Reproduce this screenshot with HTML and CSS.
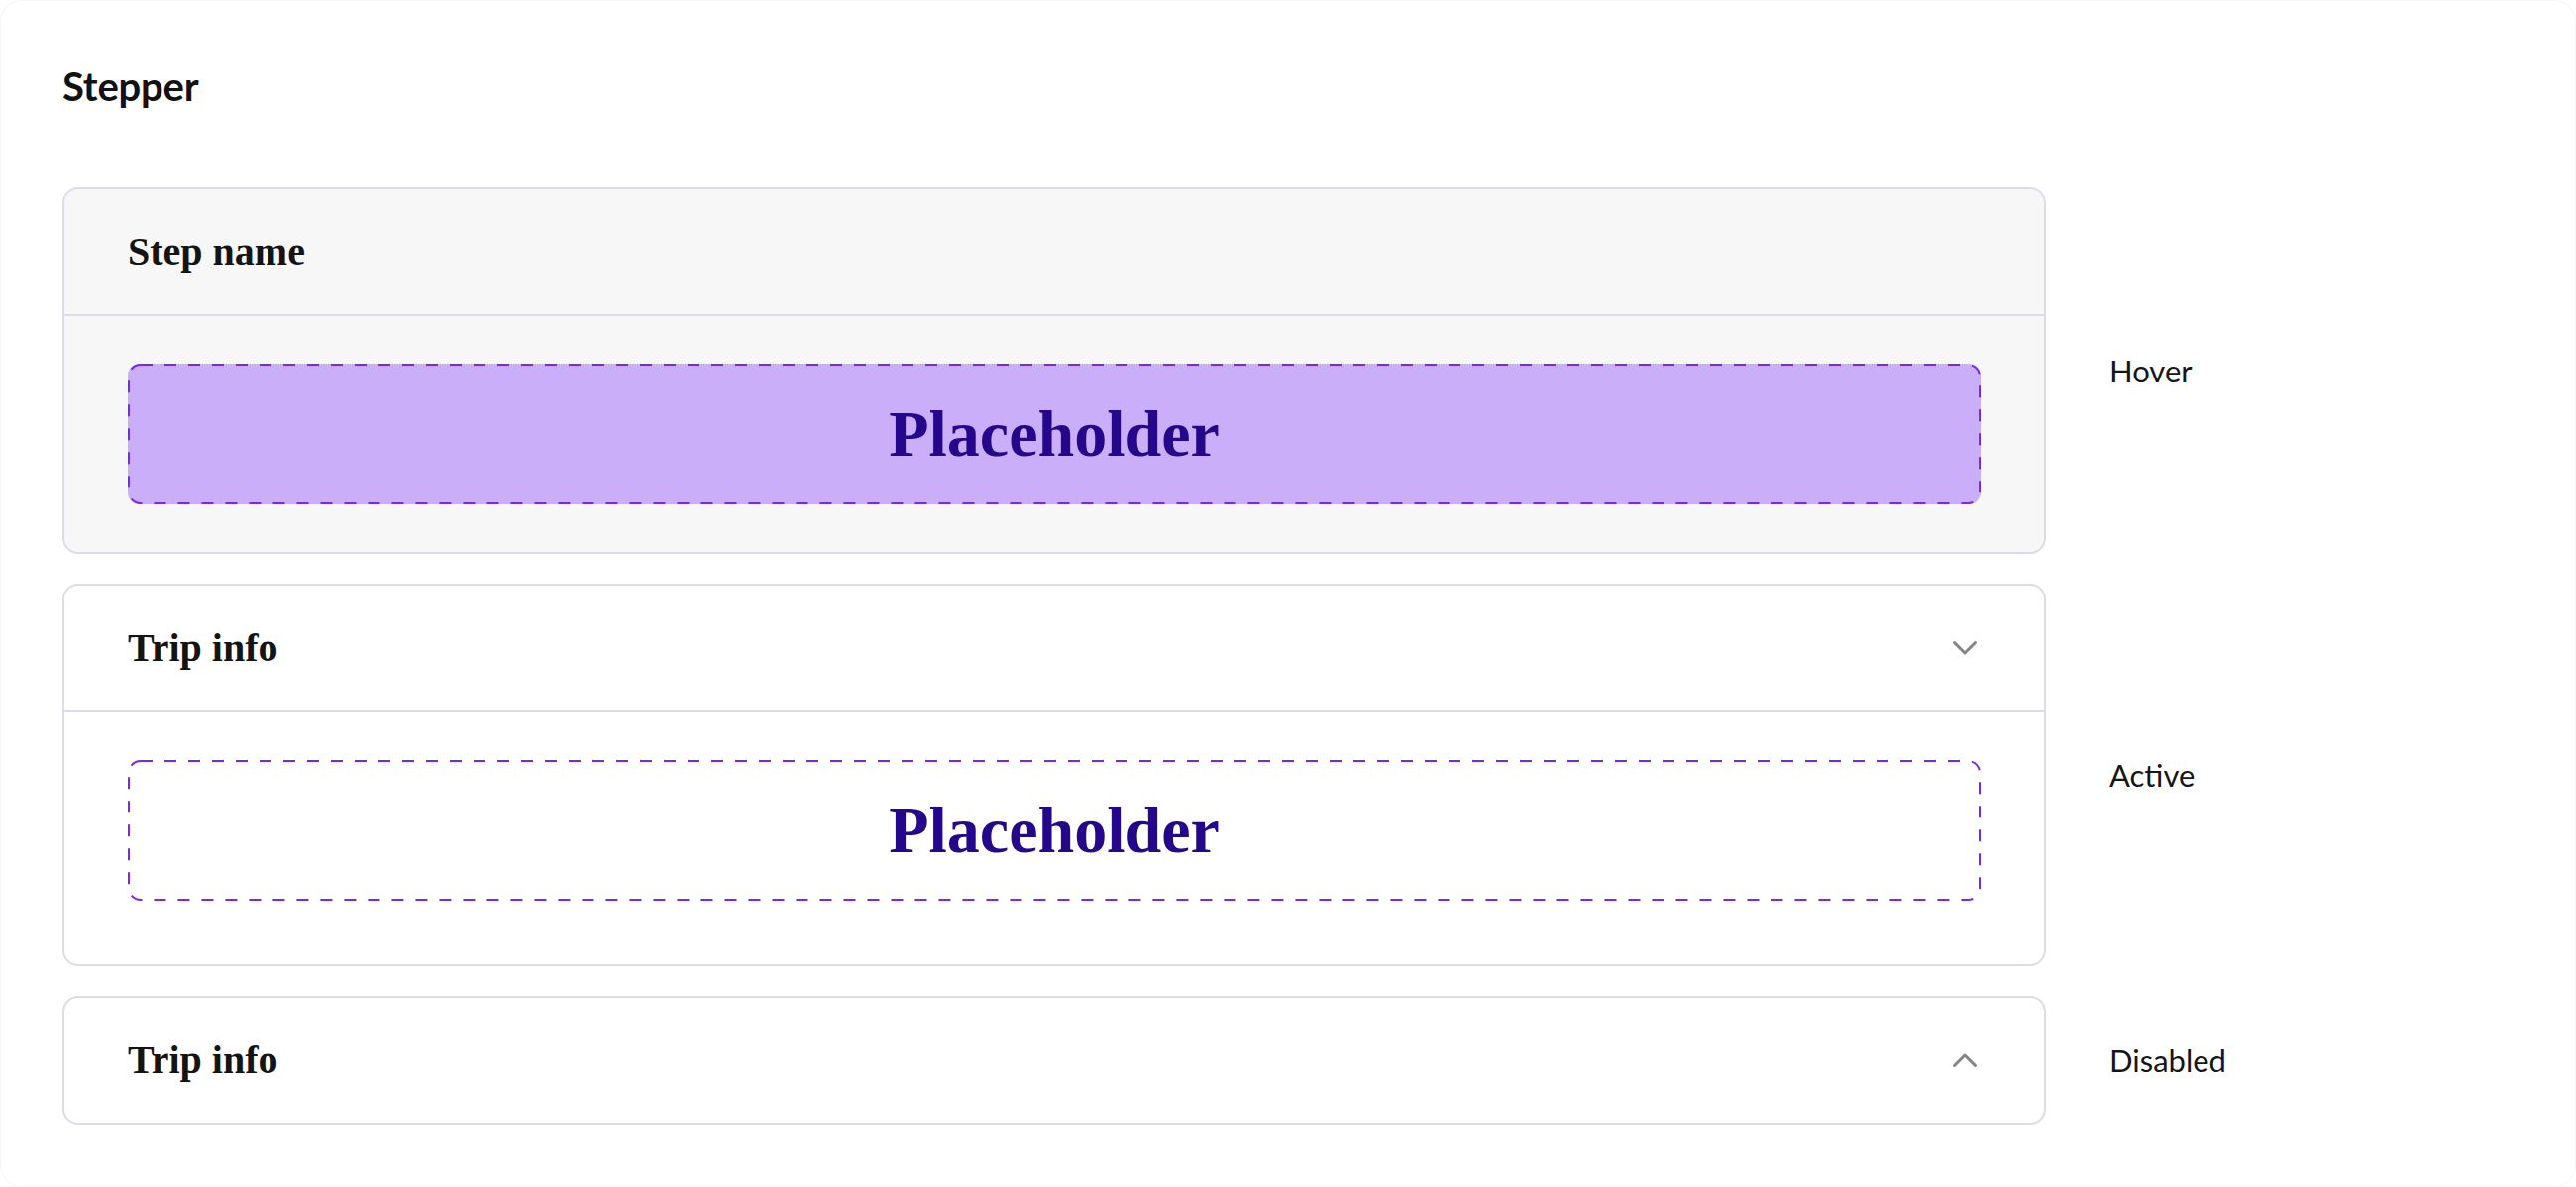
FILE: index.html
```html
<!DOCTYPE html>
<html lang="en">
<head>
<meta charset="utf-8">
<title>Stepper</title>
<link rel="stylesheet" href="styles.css">
</head>
<body>
<div class="frame">
  <h1 class="page-title">Stepper</h1>
  <div class="grid">
    <section class="card card-hover">
      <div class="card-header">
        <span class="card-title">Step name</span>
      </div>
      <div class="card-body">
        <div class="placeholder placeholder-filled">
          <svg class="dash" aria-hidden="true"><rect class="dash-rect" rx="12" ry="12"></rect></svg>
          <span class="placeholder-text">Placeholder</span>
        </div>
      </div>
    </section>
    <div class="state-label">Hover</div>

    <section class="card card-active">
      <div class="card-header">
        <span class="card-title">Trip info</span>
        <svg class="chevron" viewBox="0 0 32 32" aria-hidden="true"><path d="M5.5 10.5 L16 21 L26.5 10.5"></path></svg>
      </div>
      <div class="card-body card-body-tall">
        <div class="placeholder">
          <svg class="dash" aria-hidden="true"><rect class="dash-rect" rx="12" ry="12"></rect></svg>
          <span class="placeholder-text">Placeholder</span>
        </div>
      </div>
    </section>
    <div class="state-label">Active</div>

    <section class="card card-disabled">
      <div class="card-header card-header-only">
        <span class="card-title">Trip info</span>
        <svg class="chevron" viewBox="0 0 32 32" aria-hidden="true"><path d="M5.5 21.5 L16 11 L26.5 21.5"></path></svg>
      </div>
    </section>
    <div class="state-label">Disabled</div>
  </div>
</div>
</body>
</html>
```
FILE: styles.css
```css
* { box-sizing: border-box; }

html, body {
  margin: 0;
  padding: 0;
  background: #ffffff;
}

.frame {
  width: 2600px;
  height: 1198px;
  padding: 62px 62px 0 62px;
  border: 1px solid #f6f6f6;
  border-radius: 22px;
  background: #ffffff;
  overflow: hidden;
}

.page-title {
  margin: 0;
  font-family: Lato, "Noto Sans", sans-serif;
  font-weight: 700;
  font-size: 40px;
  line-height: 48px;
  color: #121212;
  letter-spacing: -0.2px;
}

.grid {
  margin-top: 78px;
  display: grid;
  grid-template-columns: 2002px auto;
  column-gap: 64px;
  row-gap: 30px;
  align-items: center;
  justify-content: start;
}

.card {
  border: 2px solid #dddbe8;
  border-radius: 16px;
  background: #ffffff;
  overflow: hidden;
}

.card-hover {
  background: #f7f7f7;
}

.card-header {
  height: 128px;
  padding: 0 64px;
  display: flex;
  align-items: center;
  justify-content: space-between;
  border-bottom: 2px solid #dddbe8;
}

.card-header-only {
  height: 126px;
  border-bottom: none;
}

.card-title {
  font-family: "Liberation Serif", "Times New Roman", serif;
  font-weight: 700;
  font-size: 40px;
  line-height: 48px;
  color: #141414;
}

.chevron {
  width: 32px;
  height: 32px;
  flex: none;
  fill: none;
  stroke: #858585;
  stroke-width: 3;
  stroke-linecap: round;
  stroke-linejoin: round;
}

.card-body {
  padding: 48px 64px 48px 64px;
}

.card-body-tall {
  padding-bottom: 64px;
}

.placeholder {
  position: relative;
  height: 142px;
  border-radius: 12px;
  display: flex;
  align-items: center;
  justify-content: center;
  background: transparent;
}

.placeholder-filled {
  background: #cbaefa;
}

.dash {
  position: absolute;
  left: 0;
  top: 0;
  width: 100%;
  height: 100%;
  overflow: visible;
}

.dash-rect {
  x: 1px;
  y: 1px;
  width: calc(100% - 2px);
  height: calc(100% - 2px);
  fill: none;
  stroke: #7427f5;
  stroke-width: 2;
  stroke-dasharray: 12 12;
}

.placeholder-text {
  position: relative;
  font-family: "Liberation Serif", "Times New Roman", serif;
  font-weight: 700;
  font-size: 66px;
  line-height: 76px;
  color: #24078a;
}

.state-label {
  font-family: Lato, "Noto Sans", sans-serif;
  font-weight: 400;
  font-size: 31px;
  line-height: 40px;
  color: #151515;
}
```
